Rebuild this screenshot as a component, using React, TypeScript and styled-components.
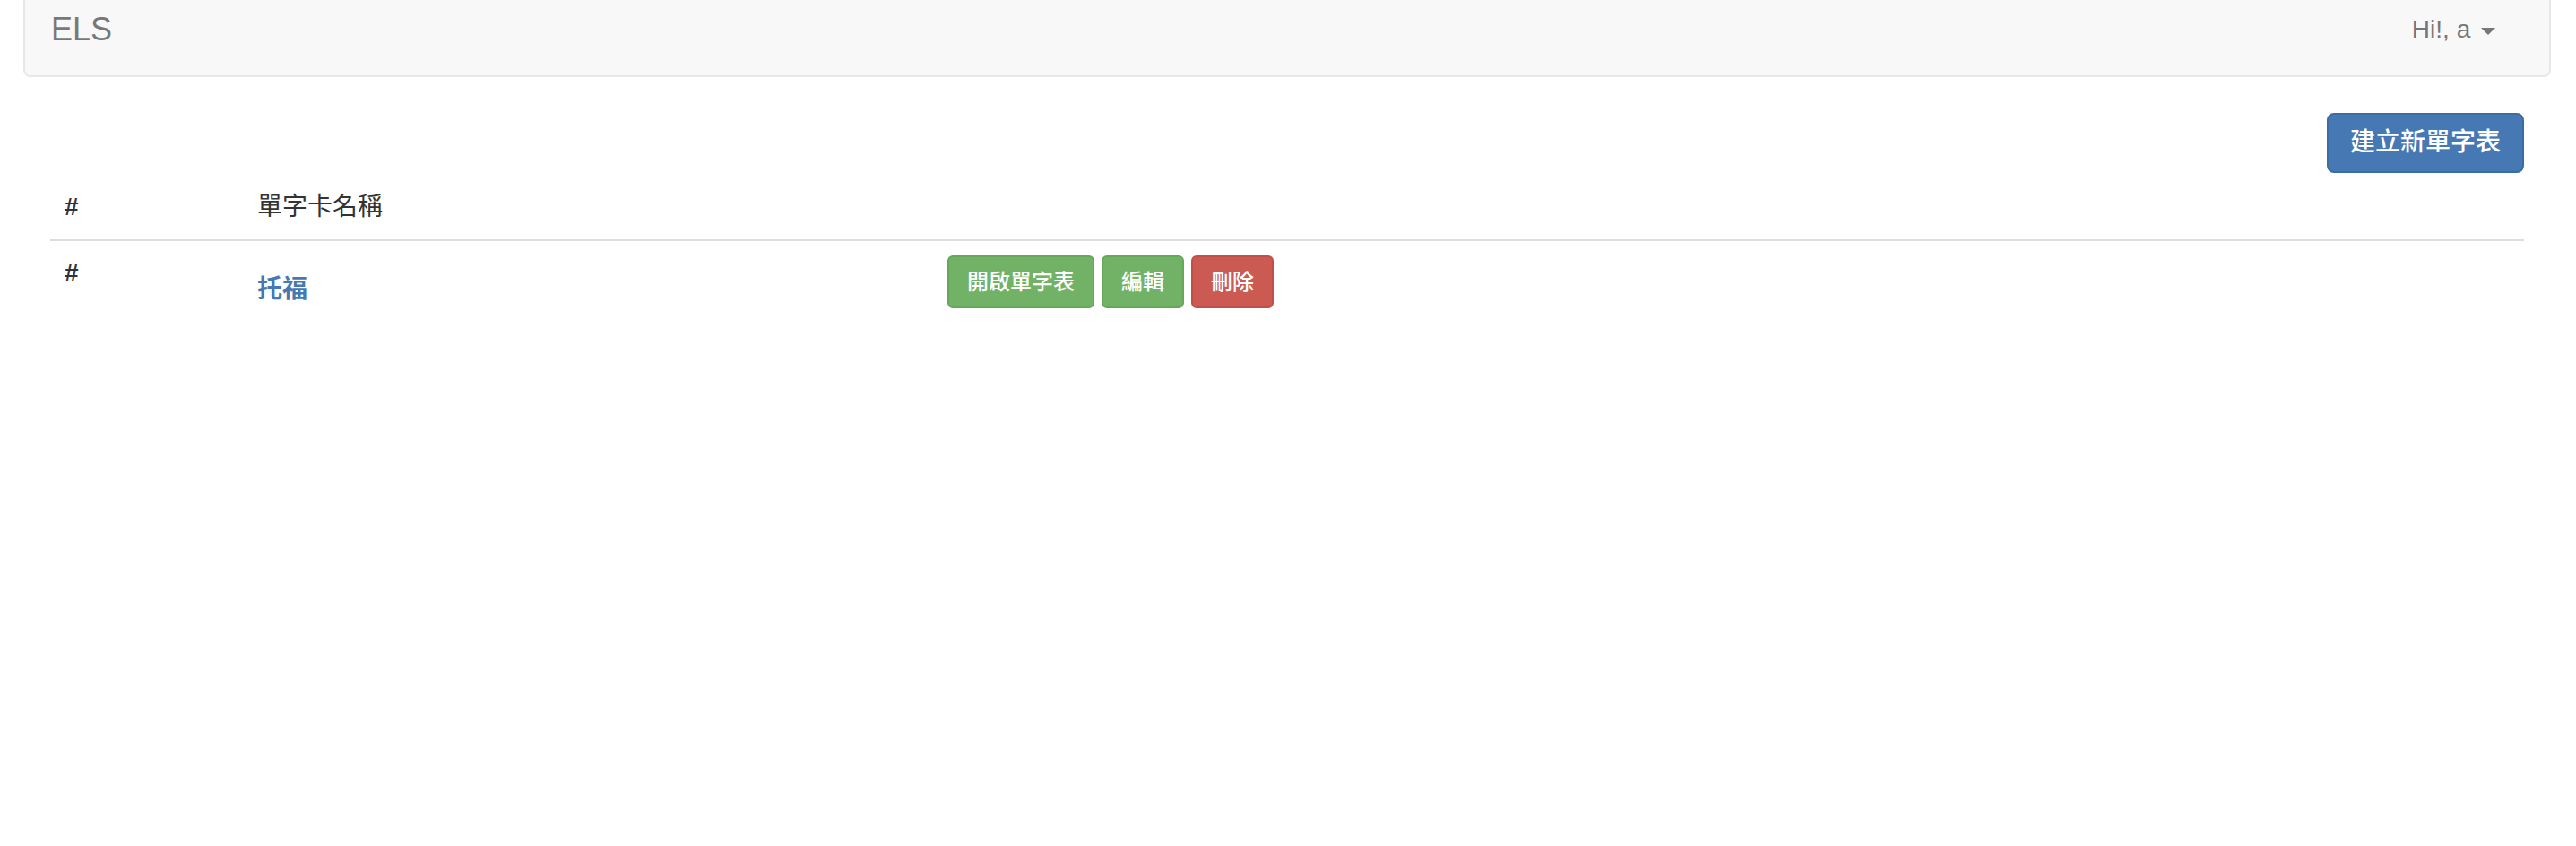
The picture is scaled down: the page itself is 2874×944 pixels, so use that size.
import React from "react";
import styled, { createGlobalStyle, css } from "styled-components";

const GlobalStyle = createGlobalStyle`
  html, body {
    margin: 0;
    padding: 0;
    background: #ffffff;
  }
  body {
    font-family: "Liberation Sans", "Noto Sans CJK TC", "Noto Sans", sans-serif;
    color: #333333;
  }
  * { box-sizing: border-box; }
`;

const Page = styled.div`
  padding: 0 28px 0 26px;
`;

const Navbar = styled.nav`
  display: flex;
  justify-content: space-between;
  align-items: flex-start;
  height: 86px;
  padding: 13px 60px 0 29px;
  background: #f8f8f8;
  border: 2px solid #e7e7e7;
  border-top: none;
  border-radius: 0 0 8px 8px;
`;

const Brand = styled.a`
  font-size: 36px;
  line-height: 40px;
  color: #777777;
  text-decoration: none;
`;

const UserMenu = styled.a`
  font-size: 28px;
  line-height: 40px;
  color: #777777;
  text-decoration: none;
  white-space: pre;
`;

const Caret = styled.span`
  display: inline-block;
  width: 0;
  height: 0;
  margin-left: 4px;
  vertical-align: middle;
  border-top: 8px solid #777777;
  border-left: 8px solid transparent;
  border-right: 8px solid transparent;
`;

const Content = styled.main`
  padding: 40px 30px 0 30px;
`;

const Toolbar = styled.div`
  display: flex;
  justify-content: flex-end;
`;

const PrimaryButton = styled.button`
  font-family: inherit;
  font-size: 28px;
  font-weight: 500;
  line-height: 40px;
  padding: 11px 24px 12px;
  color: #ffffff;
  background: #4679b4;
  border: 2px solid #3c6ca4;
  border-radius: 8px;
  cursor: pointer;
`;

const Table = styled.table`
  width: 100%;
  margin-top: 2px;
  border-collapse: collapse;
  table-layout: fixed;
`;

const HeadCell = styled.th<{ $bold?: boolean }>`
  padding: 16px;
  text-align: left;
  vertical-align: bottom;
  font-size: 28px;
  line-height: 40px;
  font-weight: ${(p) => (p.$bold ? 700 : 400)};
  color: #333333;
  border-bottom: 2px solid #dddddd;
`;

const RowHead = styled.th`
  padding: 16px;
  text-align: left;
  vertical-align: top;
  font-size: 28px;
  line-height: 40px;
  font-weight: 700;
  color: #333333;
`;

const Cell = styled.td`
  padding: 16px;
  vertical-align: top;
  font-size: 28px;
  line-height: 40px;
`;

const NameLink = styled.a`
  display: block;
  margin-top: 23px;
  font-size: 28px;
  line-height: 1.1;
  font-weight: 700;
  color: #4679b4;
  text-decoration: none;
`;

const Actions = styled.div`
  display: flex;
  gap: 8px;
`;

const variants = {
  success: css`
    background: #72b266;
    border-color: #66a85a;
  `,
  danger: css`
    background: #cb5b52;
    border-color: #c14f47;
  `,
};

const SmallButton = styled.button<{ $variant: "success" | "danger" }>`
  font-family: inherit;
  font-size: 24px;
  font-weight: 500;
  line-height: 35px;
  padding: 10px 20px;
  color: #ffffff;
  border: 2px solid;
  border-radius: 6px;
  cursor: pointer;
  ${(p) => variants[p.$variant]}
`;

const lists = [{ id: "#", name: "托福" }];

export default function App() {
  return (
    <>
      <GlobalStyle />
      <Page>
        <Navbar>
          <Brand href="#">ELS</Brand>
          <UserMenu href="#">
            Hi!, a <Caret />
          </UserMenu>
        </Navbar>
        <Content>
          <Toolbar>
            <PrimaryButton>建立新單字表</PrimaryButton>
          </Toolbar>
          <Table>
            <colgroup>
              <col style={{ width: 215 }} />
              <col style={{ width: 770 }} />
              <col />
            </colgroup>
            <thead>
              <tr>
                <HeadCell $bold>#</HeadCell>
                <HeadCell>單字卡名稱</HeadCell>
                <HeadCell />
              </tr>
            </thead>
            <tbody>
              {lists.map((l) => (
                <tr key={l.name}>
                  <RowHead>{l.id}</RowHead>
                  <Cell>
                    <NameLink href="#">{l.name}</NameLink>
                  </Cell>
                  <Cell>
                    <Actions>
                      <SmallButton $variant="success">開啟單字表</SmallButton>
                      <SmallButton $variant="success">編輯</SmallButton>
                      <SmallButton $variant="danger">刪除</SmallButton>
                    </Actions>
                  </Cell>
                </tr>
              ))}
            </tbody>
          </Table>
        </Content>
      </Page>
    </>
  );
}
